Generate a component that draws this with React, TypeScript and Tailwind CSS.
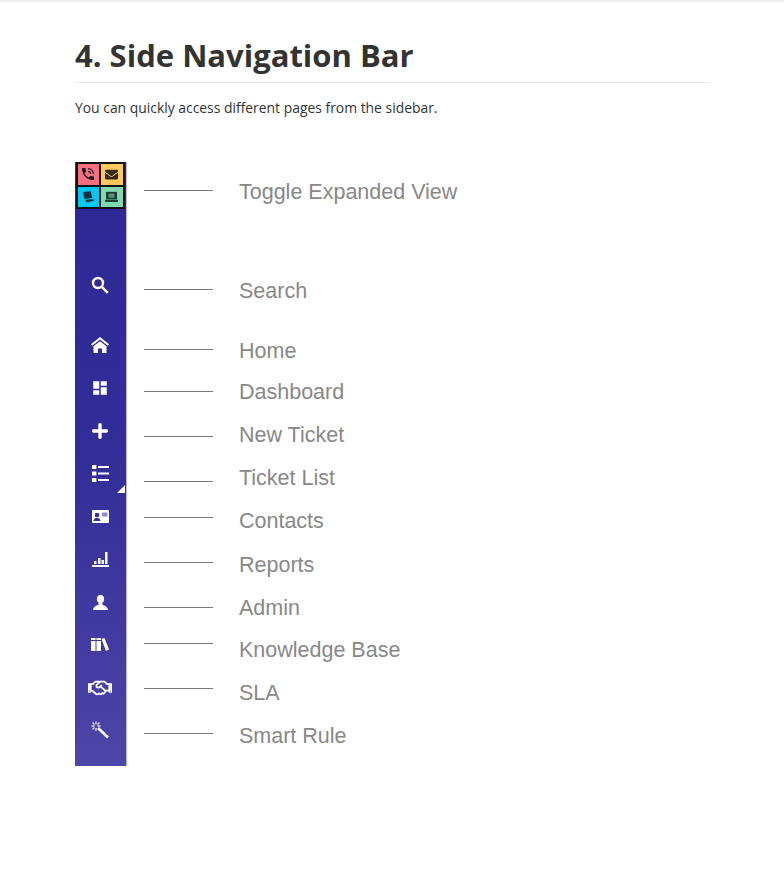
import React from 'react';
import { FaEnvelope, FaPlus, FaRegHandshake } from 'react-icons/fa';
import { MdDashboard, MdPhoneInTalk } from 'react-icons/md';

const SearchIcon = () => (
    <svg width="18" height="18" viewBox="0 0 18 18" fill="none" stroke="white">
        <circle cx="7" cy="7" r="5" strokeWidth="2.400" />
        <path d="M10.800 10.800 16.800 16.800" strokeWidth="2.600" />
    </svg>
);

const HomeIcon = () => (
    <svg width="18" height="16" viewBox="0 0 18 16" fill="white">
        <path d="M9 0 18 7.200 16.800 8.700 9 2.600 1.200 8.700 0 7.200z" />
        <path d="M9 4.200 15.500 9.200V16H11v-4.500H7V16H2.500V9.200z" />
    </svg>
);

const ListIcon = () => (
    <svg width="17" height="17" viewBox="0 0 17 17" fill="white">
        <rect x="0" y="0" width="4.400" height="4" />
        <rect x="0" y="6.500" width="4.400" height="4" />
        <rect x="0" y="13" width="4.400" height="4" />
        <rect x="6" y="1" width="11" height="2" />
        <rect x="6" y="7.500" width="11" height="2" />
        <rect x="6" y="14" width="11" height="2" />
    </svg>
);

const ContactIcon = () => (
    <svg width="17" height="13" viewBox="0 0 17 13">
        <rect width="17" height="13" rx="1" fill="white" />
        <circle cx="5" cy="5" r="2.300" fill="#332e98" />
        <path d="M1.500 11c.4-2.500 2-3.300 3.500-3.300s3.100.8 3.500 3.300z" fill="#332e98" />
        <rect x="10" y="2.500" width="5.500" height="4" fill="#8f8cc8" />
    </svg>
);

const ReportsIcon = () => (
    <svg width="17" height="15" viewBox="0 0 17 15" fill="white">
        <rect x="0" y="13" width="17" height="2" />
        <rect x="2" y="9" width="2.500" height="3" />
        <rect x="6" y="6" width="2.500" height="6" />
        <rect x="9.500" y="8" width="2.500" height="4" />
        <rect x="13" y="0" width="2.500" height="12" />
    </svg>
);

const PersonIcon = () => (
    <svg width="15" height="15" viewBox="0 0 15 15" fill="white">
        <ellipse cx="7.500" cy="4" rx="3.600" ry="4" />
        <path d="M5.500 7.500h4V10c2.500.6 5 1.700 5.500 5H0c.5-3.300 3-4.400 5.500-5z" />
    </svg>
);

const LibraryIcon = () => (
    <svg width="18" height="13" viewBox="0 0 18 13" fill="white">
        <path d="M0 0h4.500v2H0zM0 3h4.500v10H0z" />
        <path d="M5.500 0h4.500v2H5.500zM5.500 3h4.500v10H5.500z" />
        <path d="M10.500 1 13.500 0 18 11.500 15 13z" />
    </svg>
);

const WandIcon = () => (
    <svg width="18" height="18" viewBox="0 0 18 18" fill="none" stroke="white">
        <path d="M7 7 17 16.500" strokeWidth="2.600" />
        <path d="M5 .5v3M5 7v3M.5 5h3M6.500 5h3M1.500 1.500l2 2M8.500 1.500l-2 2M1.500 8.500l2-2" strokeWidth="1.300" opacity=".85" />
    </svg>
);

const TicketIcon = () => (
    <svg width="14" height="12" viewBox="0 0 16 14" fill="#17333f">
        <path d="M2 1.500 11 0 13 8 4 9.500z" />
        <path d="M5 10.500 14 9l1 2.500-9 2z" />
    </svg>
);

const ScreenIcon = () => (
    <svg width="13" height="11" viewBox="0 0 15 13">
        <rect x="1" y="1" width="13" height="9" fill="#1e3d35" />
        <rect x="4" y="3" width="7" height="5" fill="#5a8f7c" />
        <rect x="0" y="10.500" width="15" height="2.500" fill="#1e3d35" />
    </svg>
);

const icons = [
    { key: 'search', className: 'mt-[68px]', icon: <SearchIcon /> },
    { key: 'home', className: 'mt-[44px]', icon: <HomeIcon /> },
    { key: 'dashboard', className: 'mt-[27px]', icon: <MdDashboard size={18} className="text-white" /> },
    { key: 'plus', className: 'mt-[27px]', icon: <FaPlus size={18} className="text-white" /> },
    { key: 'list', className: 'mt-[26px]', icon: <ListIcon /> },
    { key: 'contacts', className: 'mt-[27px]', icon: <ContactIcon /> },
    { key: 'reports', className: 'mt-[27px]', icon: <ReportsIcon /> },
    { key: 'admin', className: 'mt-[27px]', icon: <PersonIcon /> },
    { key: 'library', className: 'mt-[26px]', icon: <LibraryIcon /> },
    { key: 'sla', className: 'mt-[28px]', icon: <FaRegHandshake size={24} className="text-white" /> },
    { key: 'wand', className: 'mt-[26px]', icon: <WandIcon /> },
];

const lineOffsets = [
    'mt-[28px]', 'mt-[98px]', 'mt-[59px]', 'mt-[41px]', 'mt-[44px]', 'mt-[44px]',
    'mt-[35px]', 'mt-[44px]', 'mt-[44px]', 'mt-[35px]', 'mt-[44px]', 'mt-[44px]',
];

const labels = [
    { text: 'Toggle Expanded View', className: 'mt-[18px]' },
    { text: 'Search', className: 'mt-[75px]' },
    { text: 'Home', className: 'mt-[36px]' },
    { text: 'Dashboard', className: 'mt-[17px]' },
    { text: 'New Ticket', className: 'mt-[19px]' },
    { text: 'Ticket List', className: 'mt-[19px]' },
    { text: 'Contacts', className: 'mt-[19px]' },
    { text: 'Reports', className: 'mt-[20px]' },
    { text: 'Admin', className: 'mt-[19px]' },
    { text: 'Knowledge Base', className: 'mt-[18px]' },
    { text: 'SLA', className: 'mt-[19px]' },
    { text: 'Smart Rule', className: 'mt-[19px]' },
];

const Tile = ({ color, children }: { color: string; children: React.ReactNode }) => (
    <div className={`flex items-center justify-center ${color}`}>{children}</div>
);

export default function App() {
    return (
        <div className="min-h-[884px] bg-white pt-[1px] font-['Open_Sans',sans-serif]">
            <div className="absolute inset-x-0 top-0 h-[4px] bg-gradient-to-b from-[#ececec] to-white" />
            <div className="ml-[75px] w-[635px]">
                <h1 className="mt-[33px] border-b border-[#e8e8e8] pb-[6px] text-[31px] leading-[42px] font-bold text-[#333333]">
                    4. Side Navigation Bar
                </h1>
                <p className="mt-[15px] text-[13.900px] leading-[20px] text-[#333333]">
                    You can quickly access different pages from the sidebar.
                </p>

                <div className="mt-[44px] flex">
                    {/* sidebar */}
                    <div className="relative flex h-[604px] w-[52px] flex-col items-center border-r border-[#b9b6e0] bg-gradient-to-b from-[#2e2896] via-[#332d98] to-[#4d46a8] pr-[1px]">
                        <div className="grid h-[47px] w-[49px] shrink-0 grid-cols-2 grid-rows-2 gap-[2px] bg-[#111111] p-[2px]">
                            <Tile color="bg-[#fa6e80]"><MdPhoneInTalk size={16} className="text-[#1a1a2a]" /></Tile>
                            <Tile color="bg-[#ffc860]"><FaEnvelope size={13} className="text-[#33291a]" /></Tile>
                            <Tile color="bg-[#00c8f4]"><TicketIcon /></Tile>
                            <Tile color="bg-[#80d8b0]"><ScreenIcon /></Tile>
                        </div>
                        {icons.map(item => (
                            <div key={item.key} className={`flex h-[16px] shrink-0 items-center justify-center ${item.className}`}>
                                {item.icon}
                            </div>
                        ))}
                        <div className="absolute top-[323px] right-[1px] h-0 w-0 border-b-[8px] border-l-[8px] border-b-white border-l-transparent" />
                    </div>

                    {/* connector lines */}
                    <div className="ml-[17px] flex w-[70px] flex-col">
                        {lineOffsets.map((offset, i) => (
                            <div key={i} className={`h-px w-[69px] bg-[#777777] ${offset}`} />
                        ))}
                    </div>

                    {/* labels */}
                    <div className="ml-[25px] flex flex-col font-['Liberation_Sans',sans-serif] text-[21.500px] leading-[24px] text-[#888888]">
                        {labels.map(label => (
                            <div key={label.text} className={label.className}>{label.text}</div>
                        ))}
                    </div>
                </div>
            </div>
        </div>
    );
}
